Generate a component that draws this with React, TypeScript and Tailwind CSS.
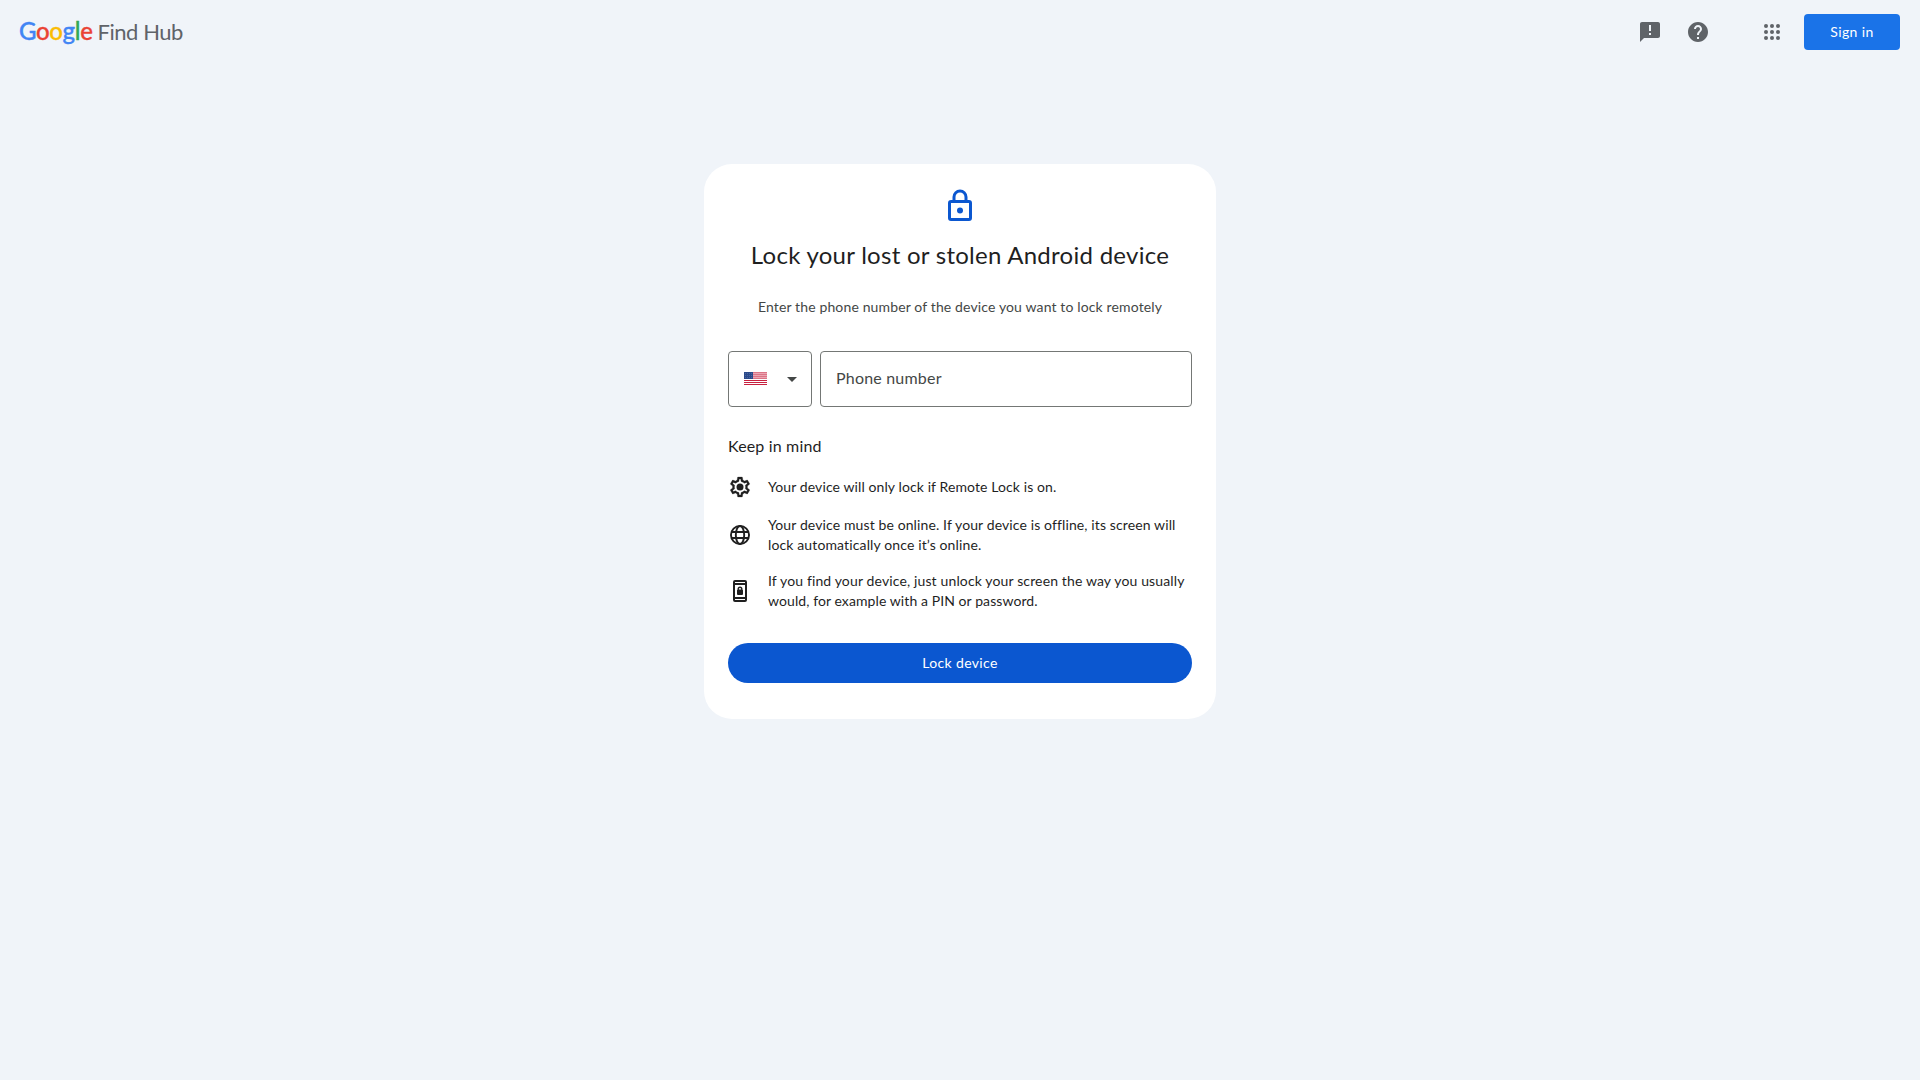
import type { ReactNode } from "react";
import { MdHelp } from "react-icons/md";

const logo = [
  ["G", "text-[#4285f4]"],
  ["o", "text-[#ea4335]"],
  ["o", "text-[#fbbc05]"],
  ["g", "text-[#4285f4]"],
  ["l", "text-[#34a853]"],
  ["e", "text-[#ea4335]"],
];

function FeedbackIcon() {
  return (
    <svg viewBox="0 0 24 24" className="mr-6 size-6" fill="currentColor">
      <path
        fillRule="evenodd"
        d="M20 2H4c-1.1 0-1.99.9-1.99 2L2 22l4-4h14c1.1 0 2-.9 2-2V4c0-1.1-.9-2-2-2zM11 5h2v6h-2zm0 8h2v2h-2z"
      />
    </svg>
  );
}

function AppsIcon() {
  return (
    <svg viewBox="0 0 24 24" className="size-6" fill="currentColor">
      {[6, 12, 18].map((y) =>
        [6, 12, 18].map((x) => <circle key={`${x}-${y}`} cx={x} cy={y} r={2} />)
      )}
    </svg>
  );
}

function LockIcon() {
  return (
    <svg viewBox="0 0 24 24" className="size-9 shrink-0 self-center text-[#0b57d0]" fill="currentColor">
      <path
        fillRule="evenodd"
        d="M6 22a2 2 0 0 1-2-2V10a2 2 0 0 1 2-2h1V6a5 5 0 0 1 10 0v2h1a2 2 0 0 1 2 2v10a2 2 0 0 1-2 2zm0-2h12V10H6zm3-12h6V6a3 3 0 0 0-6 0z"
      />
      <circle cx="12" cy="15" r="2" />
    </svg>
  );
}

function GearIcon() {
  return (
    <svg viewBox="0 0 24 24" className="size-6" fill="currentColor">
      <path
        stroke="currentColor"
        strokeWidth="0.25"
        d="M19.43 12.98c.04-.32.07-.64.07-.98 0-.34-.03-.66-.07-.98l2.11-1.65c.19-.15.24-.42.12-.64l-2-3.46a.5.5 0 0 0-.61-.22l-2.49 1c-.52-.4-1.08-.73-1.69-.98l-.38-2.65A.488.488 0 0 0 14 2h-4c-.25 0-.46.18-.49.42l-.38 2.65c-.61.25-1.17.59-1.69.98l-2.49-1a.566.566 0 0 0-.18-.03c-.17 0-.34.09-.43.25l-2 3.46c-.13.22-.07.49.12.64l2.11 1.65c-.04.32-.07.65-.07.98 0 .33.03.66.07.98l-2.11 1.65c-.19.15-.24.42-.12.64l2 3.46a.5.5 0 0 0 .61.22l2.49-1c.52.4 1.08.73 1.69.98l.38 2.65c.03.24.24.42.49.42h4c.25 0 .46-.18.49-.42l.38-2.65c.61-.25 1.17-.59 1.69-.98l2.49 1c.06.02.12.03.18.03.17 0 .34-.09.43-.25l2-3.46c.12-.22.07-.49-.12-.64l-2.11-1.65zm-1.98-1.71c.04.31.05.52.05.73 0 .21-.02.43-.05.73l-.14 1.13.89.7 1.08.84-.7 1.21-1.27-.51-1.04-.42-.9.68c-.43.32-.84.56-1.25.73l-1.06.43-.16 1.13-.2 1.35h-1.4l-.19-1.35-.16-1.13-1.06-.43c-.43-.18-.83-.41-1.23-.71l-.91-.7-1.06.43-1.27.51-.7-1.21 1.08-.84.89-.7-.14-1.13c-.03-.31-.05-.54-.05-.74s.02-.43.05-.73l.14-1.13-.89-.7-1.08-.84.7-1.21 1.27.51 1.04.42.9-.68c.43-.32.84-.56 1.25-.73l1.06-.43.16-1.13.2-1.35h1.39l.19 1.35.16 1.13 1.06.43c.43.18.83.41 1.23.71l.91.7 1.06-.43 1.27-.51.7 1.21-1.07.85-.89.7.14 1.13z"
      />
      <circle cx="12" cy="12" r="3.5" />
    </svg>
  );
}

function GlobeIcon() {
  return (
    <svg viewBox="0 0 24 24" className="size-6" fill="none" stroke="currentColor" strokeWidth="1.9">
      <circle cx="12" cy="12" r="9.05" />
      <ellipse cx="12" cy="12" rx="4.2" ry="9.05" />
      <path d="M3.4 9h17.2M3.4 15h17.2" />
    </svg>
  );
}

function PhoneLockIcon() {
  return (
    <svg viewBox="0 0 24 24" className="size-6" fill="currentColor">
      <path
        fillRule="evenodd"
        d="M7 1h10a2 2 0 0 1 2 2v18a2 2 0 0 1-2 2H7a2 2 0 0 1-2-2V3a2 2 0 0 1 2-2zm0 2v1h10V3zM7 6v12h10V6zm0 14v1h10v-1z"
      />
      <path
        fillRule="evenodd"
        d="M10 16a1 1 0 0 1-1-1v-3.5a1 1 0 0 1 .5-.87V10a2.5 2.5 0 0 1 5 0v.63a1 1 0 0 1 .5.87V15a1 1 0 0 1-1 1zm.9-5.5h2.2V10a1.1 1.1 0 0 0-2.2 0z"
      />
    </svg>
  );
}

function UsFlag() {
  return (
    <svg viewBox="0 0 23 13" className="mb-0.5 h-[13px] w-[23px]" shapeRendering="crispEdges">
      <rect width="23" height="13" fill="#fff" />
      {[0, 2, 4, 6].map((y) => (
        <g key={y}>
          <rect x="9" y={y} width="14" height="1" fill="#dc7486" />
          {y < 6 && <rect x="9" y={y + 1} width="14" height="1" fill="#eaa5b2" />}
        </g>
      ))}
      {[8, 10, 12].map((y) => (
        <rect key={y} y={y} width="23" height="1" fill="#c8203f" />
      ))}
      <rect width="9" height="7" fill="#2b4a8b" />
      {[1, 3, 5].map((y) =>
        [1, 3, 5, 7].map((x) => (
          <rect key={`${x}-${y}`} x={x} y={y} width="1" height="1" fill="#4a659c" />
        ))
      )}
    </svg>
  );
}

function Tip({ icon, children }: { icon: ReactNode; children: ReactNode }) {
  return (
    <li className="flex min-h-6 items-center gap-4">
      {icon}
      <div className="whitespace-nowrap">{children}</div>
    </li>
  );
}

export default function App() {
  return (
    <div className="flex min-h-screen flex-col bg-[#f0f4f9] font-['Lato','Liberation_Sans',sans-serif] text-[#1f1f1f]">
      <header className="flex h-16 items-center justify-between pr-5 pl-[19px]">
        <div className="flex items-baseline gap-[5px] pb-px">
          <span className="text-2xl leading-8 font-medium tracking-[-0.35px] [-webkit-text-stroke:0.35px]">
            {logo.map(([letter, color], i) => (
              <span key={i} className={color}>
                {letter}
              </span>
            ))}
          </span>
          <span className="text-[22px] leading-8 tracking-[-0.45px] text-[#5f6368]">Find Hub</span>
        </div>
        <div className="flex items-center text-[#5f6368]">
          <FeedbackIcon />
          <MdHelp className="mr-[50px] size-6" />
          <AppsIcon />
          <button className="ml-5 h-9 w-24 rounded bg-[#1a73e8] text-sm tracking-[0.4px] text-white">
            Sign in
          </button>
        </div>
      </header>

      <main className="mx-auto mt-[100px] flex h-[555px] w-lg flex-col rounded-[28px] bg-white px-6 pt-6">
        <LockIcon />
        <h1 className="mt-[15px] text-center text-2xl leading-8 tracking-[0.27px] whitespace-nowrap">
          Lock your lost or stolen Android device
        </h1>
        <p className="mt-[26px] text-center text-sm leading-5 tracking-[0.135px] whitespace-nowrap text-[#444746]">
          Enter the phone number of the device you want to lock remotely
        </p>

        <div className="mt-[34px] flex gap-2">
          <button className="flex h-14 w-21 items-center justify-between rounded border border-[#747775] pr-[14px] pl-[15px]">
            <UsFlag />
            <svg viewBox="0 0 10 5" className="h-[5px] w-[10px]" fill="#444746">
              <path d="M0 0h10L5 5z" />
            </svg>
          </button>
          <div className="flex h-14 flex-1 items-center rounded border border-[#747775] px-[15px] pb-0.5 text-base tracking-[0.2px] text-[#444746]">
            Phone number
          </div>
        </div>

        <h2 className="mt-[27px] text-base leading-6 tracking-[0.16px]">Keep in mind</h2>
        <ul className="mt-[17px] flex flex-col gap-4 text-sm leading-5">
          <Tip icon={<GearIcon />}>
            <p className="tracking-[0.1px]">Your device will only lock if Remote Lock is on.</p>
          </Tip>
          <Tip icon={<GlobeIcon />}>
            <p className="tracking-[0.115px]">
              Your device must be online. If your device is offline, its screen will
            </p>
            <p className="tracking-[0.13px]">lock automatically once it’s online.</p>
          </Tip>
          <Tip icon={<PhoneLockIcon />}>
            <p className="tracking-[0.135px]">
              If you find your device, just unlock your screen the way you usually
            </p>
            <p className="tracking-[0.085px]">would, for example with a PIN or password.</p>
          </Tip>
        </ul>

        <button className="mt-8 h-10 shrink-0 rounded-full bg-[#0b57d0] text-sm tracking-[0.35px] text-white">
          Lock device
        </button>
      </main>
    </div>
  );
}
